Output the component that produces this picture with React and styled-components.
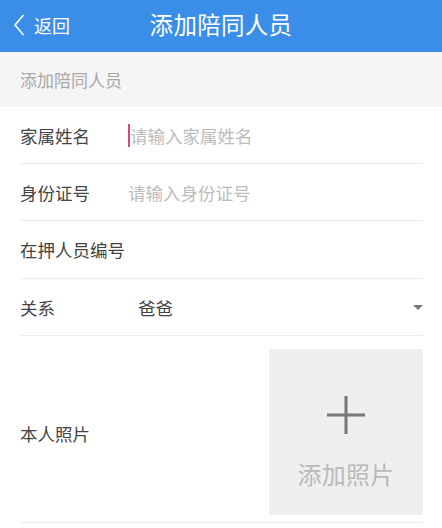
import React from 'react';
import styled, { createGlobalStyle } from 'styled-components';

// blue header: #3a8ee8, section strip: #f5f5f5, photo box: #efefef

const GlobalStyle = createGlobalStyle`
    html, body {
        margin: 0;
        padding: 0;
        background: #ffffff;
        font-family: "Noto Sans CJK SC", "Noto Sans", sans-serif;
    }
    * {
        box-sizing: border-box;
    }
`

const Page = styled.div`
    width: 442px;
    min-height: 528px;
    background: #ffffff;
`

const Header = styled.header`
    height: 52px;
    background: #3a8ee8;
    display: grid;
    grid-template-columns: 1fr auto 1fr;
    align-items: center;
    color: #ffffff;
`

const BackButton = styled.div`
    display: flex;
    align-items: center;
    gap: 9px;
    padding-left: 13px;
    padding-bottom: 3px;
    font-size: 18px;
    color: #ffffff;
`

const Title = styled.h1`
    margin: 0;
    padding-bottom: 4px;
    font-size: 23.5px;
    font-weight: 400;
    letter-spacing: 0.3px;
`

const SectionStrip = styled.div`
    height: 55px;
    background: #f5f5f5;
    display: flex;
    align-items: center;
    padding-left: 20px;
    font-size: 17px;
    color: #a8a8a8;
`

const Form = styled.div`
    padding: 0 19px 0 20px;
`

const Row = styled.div`
    display: flex;
    align-items: center;
    height: ${props => props.height || 57}px;
    border-bottom: 1px solid #ececec;
`

const Label = styled.div`
    width: ${props => props.width || 108}px;
    flex-shrink: 0;
    padding-top: ${props => props.offset || 0}px;
    font-size: 17.5px;
    color: #444444;
`

const Field = styled.div`
    flex: 1;
    display: flex;
    align-items: center;
    font-size: 17.5px;
    color: ${props => props.value ? '#444444' : '#bcbcbc'};
`

const Cursor = styled.span`
    display: inline-block;
    width: 2px;
    height: 23px;
    background: #d6487a;
`

const Caret = styled.span`
    margin-left: auto;
    width: 0;
    height: 0;
    border-left: 5px solid transparent;
    border-right: 5px solid transparent;
    border-top: 5px solid #777777;
`

const PhotoRow = styled.div`
    display: flex;
    align-items: center;
    justify-content: space-between;
    height: 187px;
    border-bottom: 1px solid #ececec;
`

const PhotoBox = styled.div`
    align-self: flex-start;
    width: 154px;
    height: 166px;
    margin-top: 13px;
    background: #efefef;
    display: flex;
    flex-direction: column;
    align-items: center;
    padding-top: 46px;
    gap: 22px;
`

const PhotoText = styled.div`
    font-size: 24px;
    line-height: 34px;
    color: #b9b9b9;
    letter-spacing: 0.2px;
`

function App() {
    return (
        <Page>
            <GlobalStyle />
            <Header>
                <BackButton>
                    <svg width="12" height="24" viewBox="0 0 12 24">
                        <path d="M10.5 2 L2 12 L10.5 22" fill="none" stroke="#ffffff" strokeWidth="1.6" />
                    </svg>
                    <span>返回</span>
                </BackButton>
                <Title>添加陪同人员</Title>
                <div />
            </Header>
            <SectionStrip>添加陪同人员</SectionStrip>
            <Form>
                <Row>
                    <Label>家属姓名</Label>
                    <Field><Cursor />请输入家属姓名</Field>
                </Row>
                <Row>
                    <Label>身份证号</Label>
                    <Field>请输入身份证号</Field>
                </Row>
                <Row height={58}>
                    <Label>在押人员编号</Label>
                    <Field></Field>
                </Row>
                <Row>
                    <Label width={118}>关系</Label>
                    <Field value="1">爸爸<Caret /></Field>
                </Row>
                <PhotoRow>
                    <Label offset={8}>本人照片</Label>
                    <PhotoBox>
                        <svg width="38" height="40" viewBox="0 0 38 40">
                            <path d="M19 1 V39 M0 20 H38" stroke="#777777" strokeWidth="3" />
                        </svg>
                        <PhotoText>添加照片</PhotoText>
                    </PhotoBox>
                </PhotoRow>
            </Form>
        </Page>
    );
}

export default App;
